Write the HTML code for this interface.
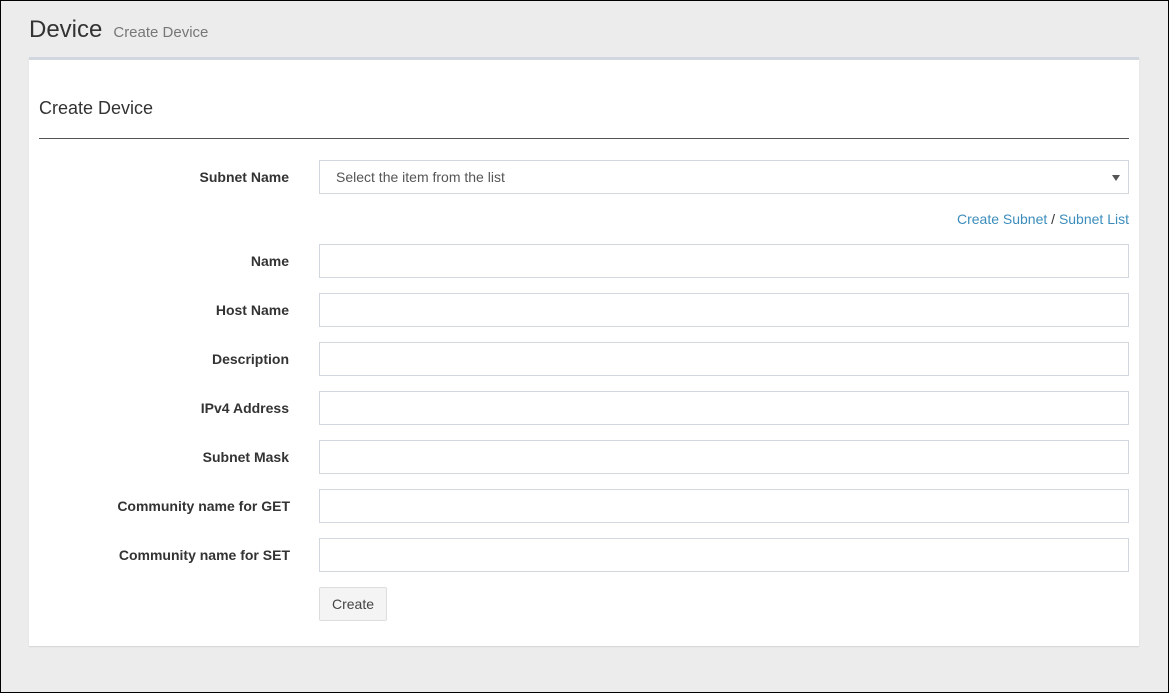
<!DOCTYPE html><html><head><style>
body{margin:0;width:1169px;height:693px;overflow:hidden;font-family:"Liberation Sans",sans-serif;}
.frame{position:absolute;left:0;top:0;width:1167px;height:691px;border:1px solid #000;background:#ececec;}
.h1{position:absolute;left:29px;top:16px;font-size:24px;color:#333;}
.h1 small{font-size:15px;color:#777;margin-left:11px;}
.card{position:absolute;left:29px;top:57px;width:1110px;height:589px;background:#fff;border-top:3px solid #d2d6de;box-sizing:border-box;box-shadow:0 1px 1px rgba(0,0,0,.1);}
.title{position:absolute;left:39px;top:98px;font-size:18px;color:#333;}
.hr{position:absolute;left:39px;top:138px;width:1090px;height:1px;background:#555;}
.lbl{position:absolute;right:880px;font-size:14px;font-weight:bold;color:#333;}
.in{position:absolute;left:319px;width:810px;height:34px;box-sizing:border-box;border:1px solid #d2d6de;background:#fff;}
.sel{font-size:14px;color:#555;padding:8px 16px;}
.sel:after{content:"";position:absolute;right:8px;top:14px;border:4px solid transparent;border-top:6px solid #555;border-bottom:0;}
.links{position:absolute;right:40px;top:211px;font-size:14px;color:#333;}
.links a{color:#3c8dbc;text-decoration:none;}
.btn{position:absolute;left:319px;top:587px;width:68px;height:34px;box-sizing:border-box;border:1px solid #ddd;background:#f4f4f4;font-size:14px;color:#444;text-align:center;line-height:32px;border-radius:2px;}
</style></head><body><div class="frame"></div>
<div class="h1">Device<small>Create Device</small></div>
<div class="card"></div>
<div class="title">Create Device</div>
<div class="hr"></div>
<div class="lbl" style="top:169px">Subnet Name</div>
<div class="in sel" style="top:160px">Select the item from the list</div>
<div class="links"><a>Create Subnet</a> / <a>Subnet List</a></div>
<div class="lbl" style="top:253px">Name</div><div class="in" style="top:244px"></div>
<div class="lbl" style="top:302px">Host Name</div><div class="in" style="top:293px"></div>
<div class="lbl" style="top:351px">Description</div><div class="in" style="top:342px"></div>
<div class="lbl" style="top:400px">IPv4 Address</div><div class="in" style="top:391px"></div>
<div class="lbl" style="top:449px">Subnet Mask</div><div class="in" style="top:440px"></div>
<div class="lbl" style="top:498px;right:879px">Community name for GET</div><div class="in" style="top:489px"></div>
<div class="lbl" style="top:547px;right:879px">Community name for SET</div><div class="in" style="top:538px"></div>
<div class="btn">Create</div>
</body></html>
